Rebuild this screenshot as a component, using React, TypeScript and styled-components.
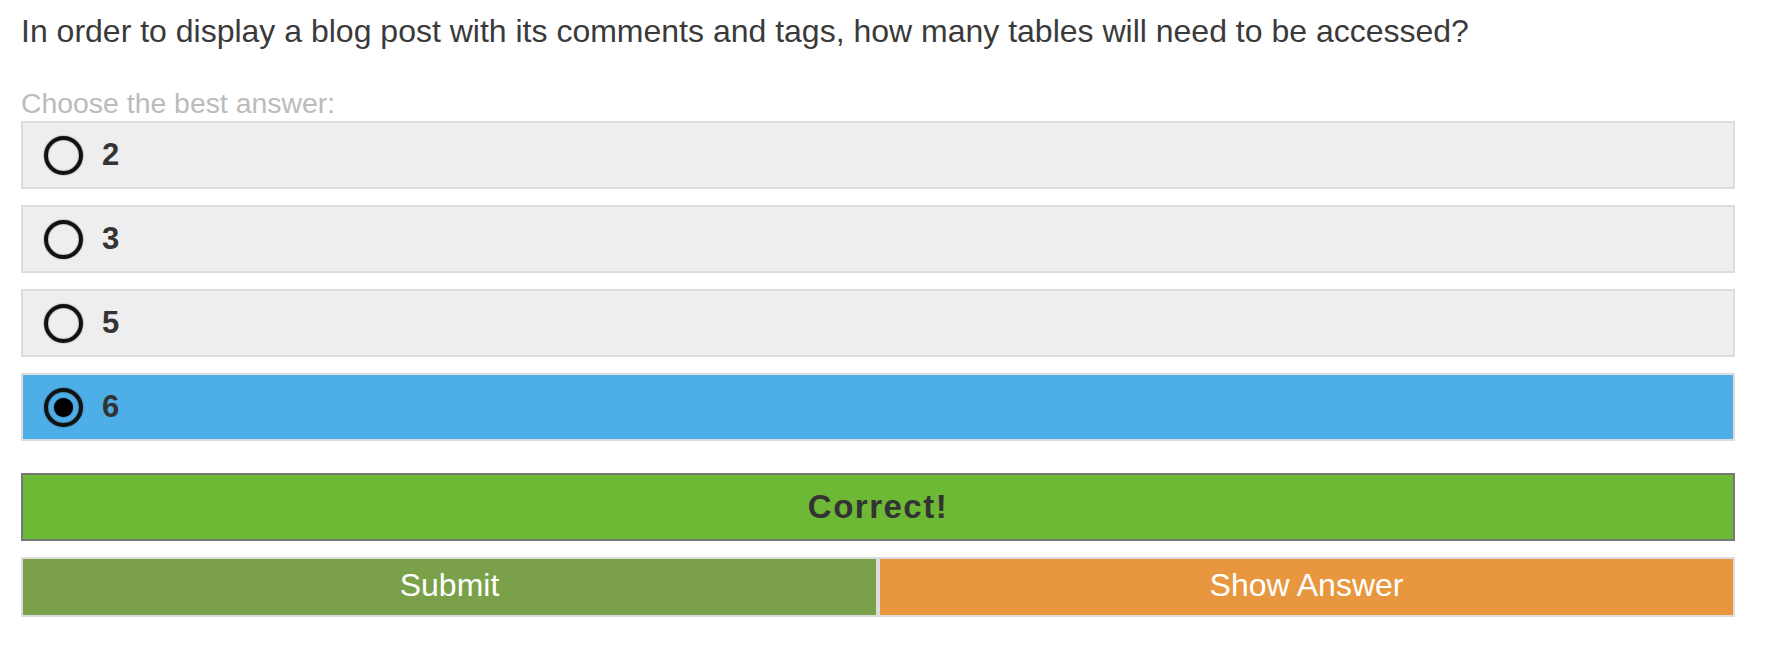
import React, { useState } from "react";
import styled, { createGlobalStyle } from "styled-components";

const GlobalStyle = createGlobalStyle`
  html, body {
    margin: 0;
    padding: 0;
    background: #ffffff;
  }
  body {
    font-family: "Liberation Sans", Arial, Helvetica, sans-serif;
  }
`;

const Page = styled.div`
  width: 1714px;
  padding: 13px 0 0 21px;
  display: flex;
  flex-direction: column;
`;

const Question = styled.div`
  font-size: 32px;
  line-height: 36px;
  color: #3a3a3a;
`;

const Prompt = styled.div`
  margin-top: 38px;
  font-size: 28.4px;
  line-height: 32px;
  color: #bbbbbb;
`;

const Options = styled.div`
  margin-top: 2px;
  display: flex;
  flex-direction: column;
  gap: 16px;
`;

const Option = styled.label<{ $selected: boolean }>`
  box-sizing: border-box;
  height: 68px;
  border: 2px solid #dddddd;
  background: ${(p) => (p.$selected ? "#4eaee8" : "#eeeeee")};
  display: flex;
  align-items: center;
  padding-left: 21px;
  gap: 19px;
  cursor: pointer;
`;

const Radio = styled.input`
  appearance: none;
  -webkit-appearance: none;
  margin: 0;
  box-sizing: border-box;
  width: 39px;
  height: 39px;
  border-radius: 50%;
  border: 4px solid #111111;
  box-shadow: 0 0 1.5px rgba(0, 0, 0, 0.7), inset 0 0 1.5px rgba(0, 0, 0, 0.7);
  background: transparent;
  display: grid;
  place-items: center;
  flex-shrink: 0;

  &::after {
    content: "";
    width: 19px;
    height: 19px;
    border-radius: 50%;
    background: #000000;
    box-shadow: 0 0 1.5px rgba(0, 0, 0, 0.7);
    transform: scale(0);
  }

  &:checked::after {
    transform: scale(1);
  }
`;

const OptionText = styled.span`
  font-size: 31px;
  font-weight: 700;
  color: #333333;
`;

const Result = styled.div`
  box-sizing: border-box;
  margin-top: 32px;
  height: 68px;
  border: 2px solid #777777;
  background: #6db935;
  display: flex;
  align-items: center;
  justify-content: center;
  font-size: 33px;
  font-weight: 700;
  letter-spacing: 1.5px;
  color: #333333;
`;

const Actions = styled.div`
  margin-top: 16px;
  display: grid;
  grid-template-columns: 1fr 1fr;
`;

const ActionButton = styled.button<{ $tone: "submit" | "show" }>`
  box-sizing: border-box;
  height: 60px;
  margin: 0;
  border: 2px solid #dddddd;
  background: ${(p) => (p.$tone === "submit" ? "#7aa049" : "#e8973f")};
  color: #ffffff;
  font-family: "Liberation Sans", Arial, Helvetica, sans-serif;
  font-size: 32px;
  font-weight: 400;
  display: flex;
  align-items: center;
  justify-content: center;
  padding: 0 0 4px;
  cursor: pointer;
`;

const answers = ["2", "3", "5", "6"];

export default function App() {
  const [selected, setSelected] = useState("6");
  return (
    <>
      <GlobalStyle />
      <Page>
        <Question>
          In order to display a blog post with its comments and tags, how many tables will need to be accessed?
        </Question>
        <Prompt>Choose the best answer:</Prompt>
        <Options>
          {answers.map((a) => (
            <Option key={a} $selected={selected === a}>
              <Radio
                type="radio"
                name="answer"
                value={a}
                checked={selected === a}
                onChange={() => setSelected(a)}
              />
              <OptionText>{a}</OptionText>
            </Option>
          ))}
        </Options>
        <Result>Correct!</Result>
        <Actions>
          <ActionButton $tone="submit">Submit</ActionButton>
          <ActionButton $tone="show">Show Answer</ActionButton>
        </Actions>
      </Page>
    </>
  );
}
